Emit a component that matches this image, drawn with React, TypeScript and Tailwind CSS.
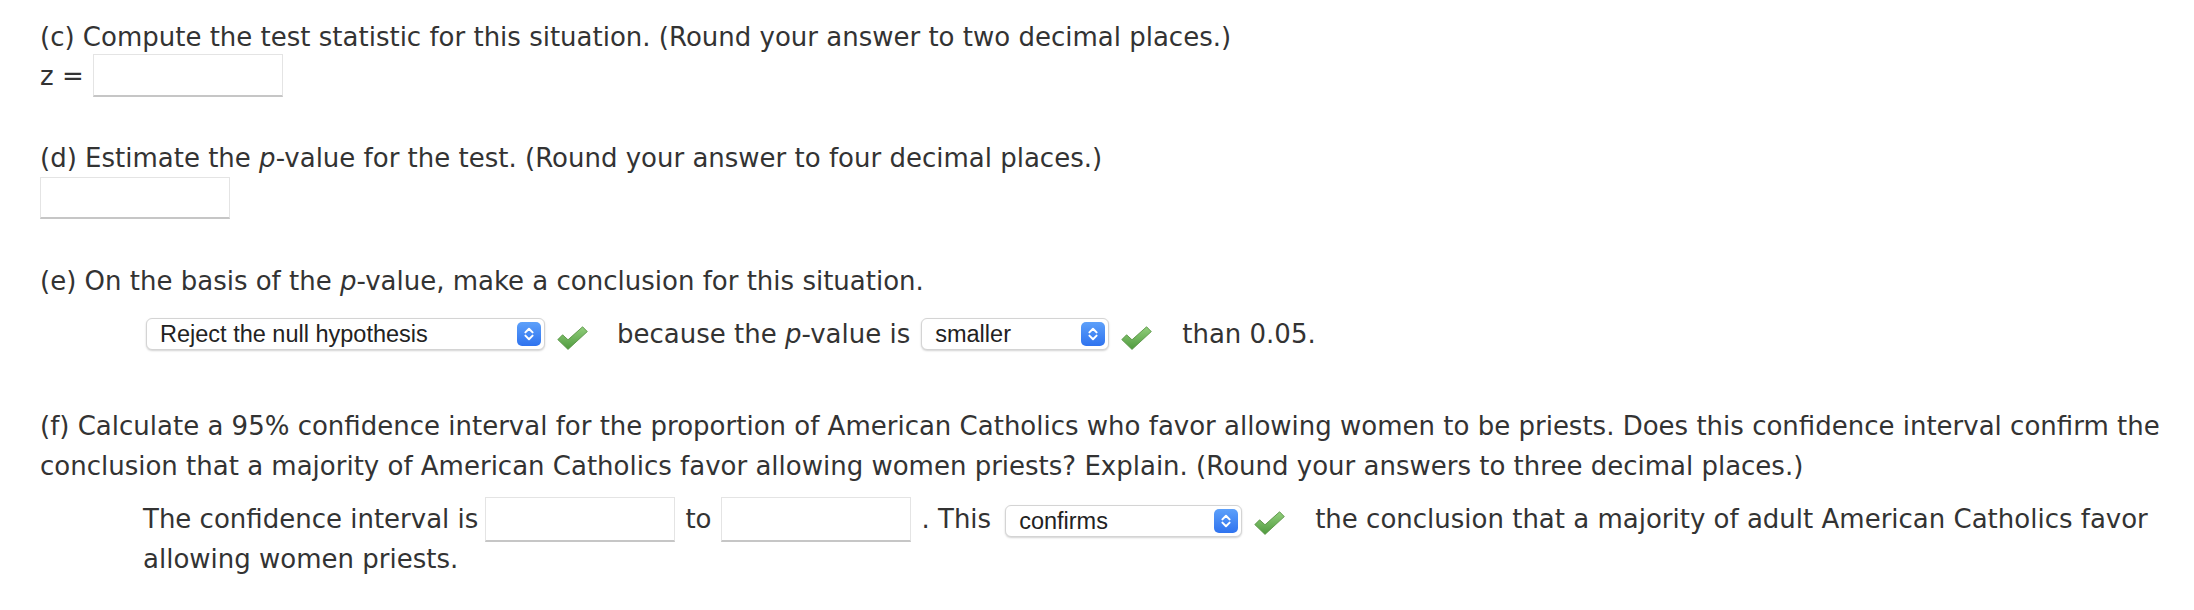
import React from "react";

const Check = ({ className = "" }: { className?: string }) => (
  <svg
    width="31"
    height="24"
    viewBox="0 0 31 24"
    className={`inline-block shrink-0 ${className}`}
  >
    <defs>
      <linearGradient id="chk" x1="0" y1="0" x2="0" y2="1">
        <stop offset="0" stopColor="#92cf7c" />
        <stop offset="1" stopColor="#4f9a3e" />
      </linearGradient>
    </defs>
    <path
      d="M0.8 13.6 L5.6 8.8 L11 13.8 L25.6 0.8 L30.3 5.6 L11 23.4 Z"
      fill="url(#chk)"
      stroke="#5a9446"
      strokeWidth="0.9"
      strokeLinejoin="round"
    />
  </svg>
);

const Stepper = () => (
  <span className="flex shrink-0 items-center justify-center w-[24px] h-[24px] rounded-[5px] bg-[linear-gradient(180deg,#5da0fa,#2f73ef)]">
    <svg width="24" height="24" viewBox="0 0 24 24" className="shrink-0">
      <path
        d="M8.4 10.4 L12 6.8 L15.6 10.4 M8.4 13.6 L12 17.2 L15.6 13.6"
        fill="none"
        stroke="#fff"
        strokeWidth="2"
        strokeLinecap="round"
        strokeLinejoin="round"
      />
    </svg>
  </span>
);

const Select = ({
  value,
  className = "",
}: {
  value: string;
  className?: string;
}) => (
  <span
    className={`inline-flex items-center justify-between h-[32px] pl-[13px] pr-[3px] bg-white border border-[#d4d4d4] rounded-[6px] shadow-[0_1px_2px_rgba(0,0,0,0.18)] font-['Liberation_Sans',Arial,sans-serif] text-[23.5px] leading-[28px] text-[#222] ${className}`}
  >
    <span className="whitespace-nowrap">{value}</span>
    <Stepper />
  </span>
);

const blankBox =
  "w-[190px] bg-white border border-[#e4e4e4] border-b-2 border-b-[#c6c6c6]";

export default function App() {
  return (
    <div className="bg-white min-h-[610px] pl-[40px] pr-[20px] pt-[17px] font-['DejaVu_Sans',Verdana,sans-serif] text-[26px] leading-[40px] text-[#333]">
      <p>
        (c) Compute the test statistic for this situation. (Round your answer
        to two decimal places.)
      </p>
      <div className="flex items-center h-[43px] -mt-[3px]">
        <span>z =</span>
        <div className={`ml-[9px] h-[43px] ${blankBox}`} />
      </div>

      <p className="mt-[41px]">
        (d) Estimate the <i>p</i>-value for the test. (Round your answer to
        four decimal places.)
      </p>
      <div className={`h-[42px] -mt-[1px] ${blankBox}`} />

      <p className="mt-[42px]">
        (e) On the basis of the <i>p</i>-value, make a conclusion for this
        situation.
      </p>
      <div className="flex items-center h-[32px] mt-[17px] ml-[106px]">
        <Select value="Reject the null hypothesis" className="w-[399px]" />
        <Check className="ml-[12px] self-end" />
        <span className="ml-[29px]">
          because the <i>p</i>-value is
        </span>
        <Select value="smaller" className="ml-[11px] w-[188px]" />
        <Check className="ml-[12px] self-end" />
        <span className="ml-[30px]">than 0.05.</span>
      </div>

      <p className="mt-[56px]">
        (f) Calculate a 95% confidence interval for the proportion of American
        Catholics who favor allowing women to be priests. Does this confidence
        interval confirm the conclusion that a majority of American Catholics
        favor allowing women priests? Explain. (Round your answers to three
        decimal places.)
      </p>
      <p className="mt-[13px] ml-[103px]">
        The confidence interval is
        <span
          className={`inline-block ml-[7px] mr-[10px] h-[45px] -my-[3px] align-[-11px] ${blankBox}`}
        />
        to
        <span
          className={`inline-block ml-[10px] mr-[10px] h-[45px] -my-[3px] align-[-11px] ${blankBox}`}
        />
        . This
        <Select value="confirms" className="ml-[14px] w-[237px] align-middle" />
        <Check className="ml-[12px] mr-[30px] align-[-7px]" />
        the conclusion that a majority of adult American Catholics favor
        allowing women priests.
      </p>
    </div>
  );
}
